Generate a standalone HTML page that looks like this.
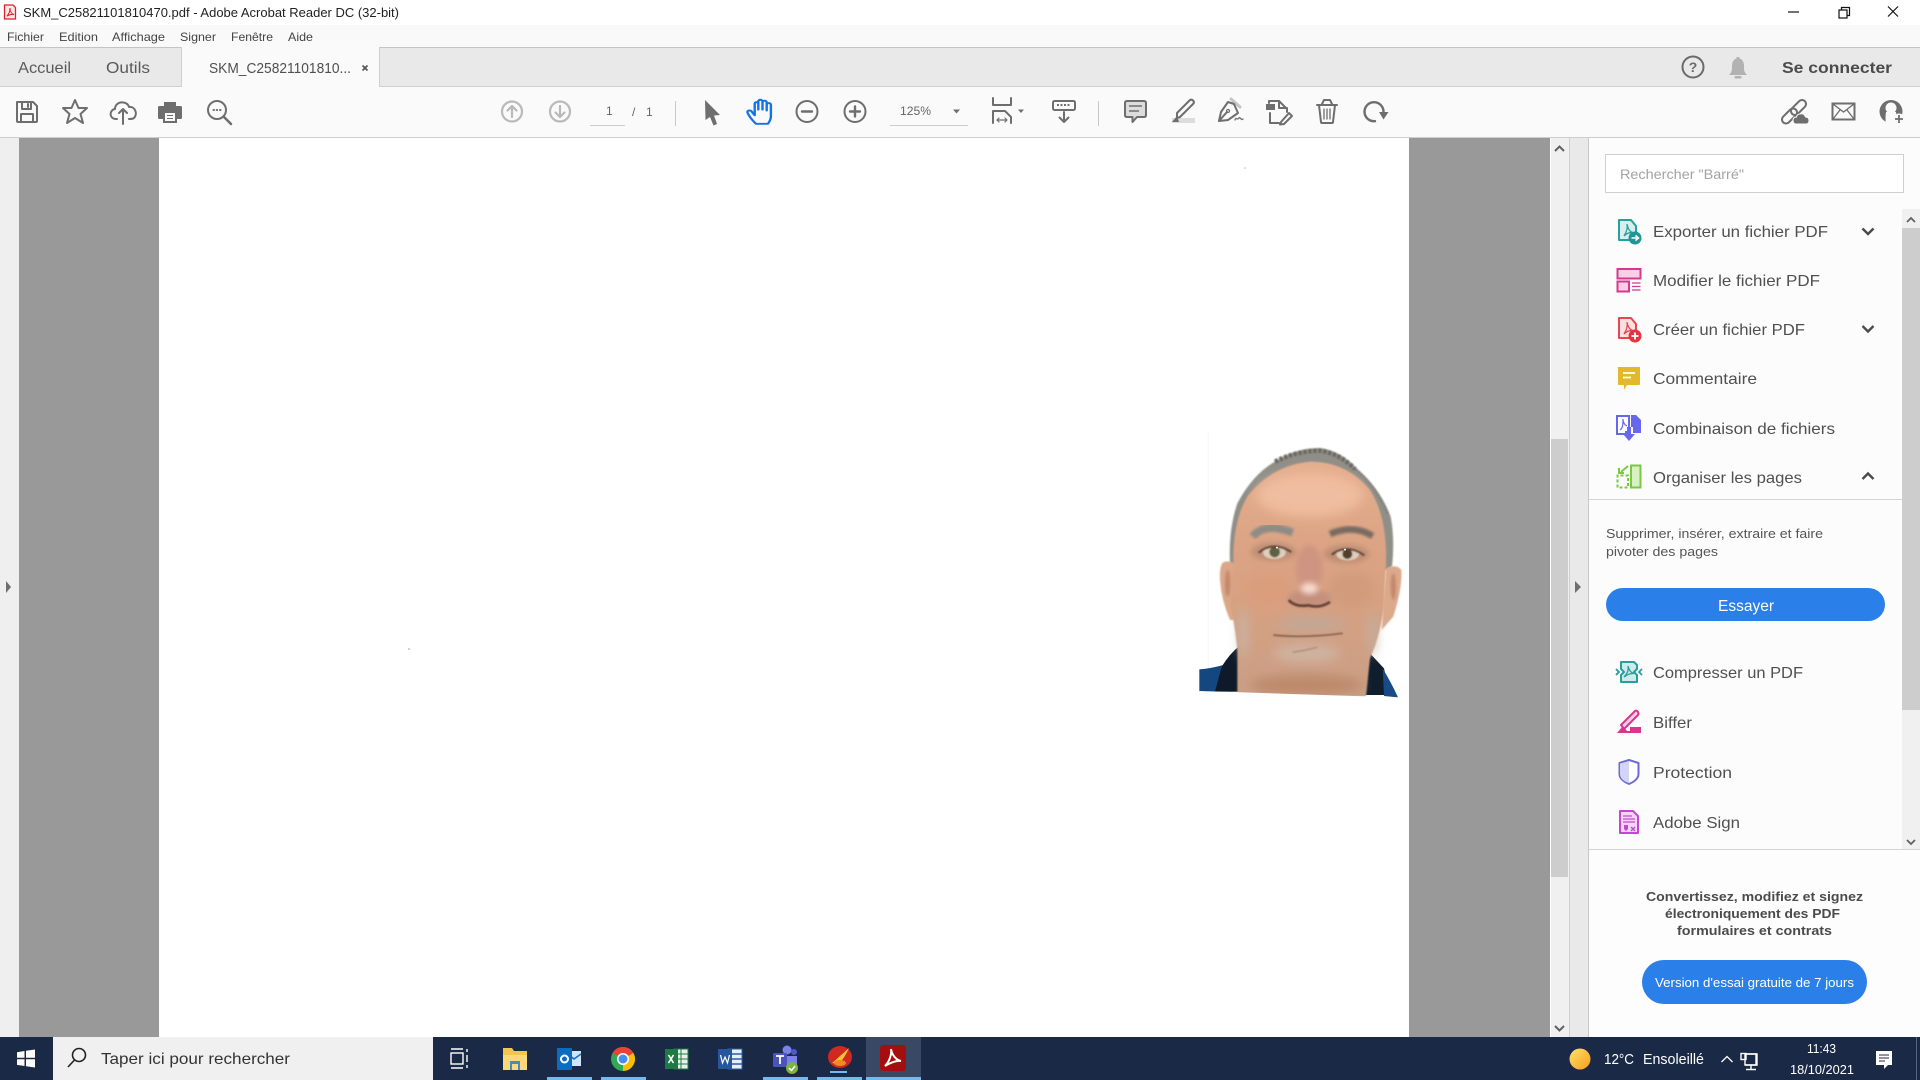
<!DOCTYPE html>
<html lang="fr"><head><meta charset="utf-8"><title>SKM_C25821101810470.pdf - Adobe Acrobat Reader DC (32-bit)</title>
<style>
html,body{margin:0;padding:0;background:#fff;width:1920px;height:1080px;overflow:hidden}
svg{display:block}
text{font-family:"Liberation Sans",sans-serif;fill:#4b4b4b}
.l{font-size:16px;fill:#505050}
.m{font-size:12px;fill:#444}
.k{fill:none;stroke:#6e6e6e;stroke-width:2;stroke-linejoin:round;stroke-linecap:round}
.d{fill:none;stroke:#b9b9b9;stroke-width:2.2;stroke-linecap:round;stroke-linejoin:round}
.w{fill:none;stroke:#fff;stroke-width:1.4}
</style></head><body>
<svg width="1920" height="1080" viewBox="0 0 1920 1080" xmlns="http://www.w3.org/2000/svg">
<defs>
<filter id="b8" x="-30%" y="-30%" width="160%" height="160%"><feGaussianBlur stdDeviation="8"/></filter>
<filter id="b16" x="-40%" y="-40%" width="180%" height="180%"><feGaussianBlur stdDeviation="16"/></filter>
<filter id="b4" x="-30%" y="-30%" width="160%" height="160%"><feGaussianBlur stdDeviation="4"/></filter>
<filter id="b2" x="-30%" y="-30%" width="160%" height="160%"><feGaussianBlur stdDeviation="2"/></filter>
<linearGradient id="skin" x1="0" y1="0" x2="0" y2="1"><stop offset="0" stop-color="#e4ae8f"/><stop offset=".35" stop-color="#dca484"/><stop offset=".65" stop-color="#d5a082"/><stop offset="1" stop-color="#c99f85"/></linearGradient>
<linearGradient id="sun" x1="0" y1="0" x2="1" y2="1"><stop offset="0" stop-color="#ffe26b"/><stop offset="1" stop-color="#f99d1c"/></linearGradient>
<clipPath id="ph"><path d="M0 0H720V832L652 832L58 813V870H0Z"/></clipPath>
</defs>

<!-- title bar -->
<rect width="1920" height="25" fill="#fff"/>
<g transform="translate(10 12)"><path d="M-5.5-7H3L5.500-4.500V7H-5.500Z" fill="#fbe5e5" stroke="#d8232a" stroke-width="1.300"/><path d="M-3 4C-1 2 0-1 0-4C0 0 2 2 4 2.500C1 2 -1 3 -3 4Z" fill="none" stroke="#d8232a" stroke-width="1"/></g>
<text x="23" y="17" font-size="12.500" style="fill:#222" textLength="376" lengthAdjust="spacingAndGlyphs">SKM_C25821101810470.pdf - Adobe Acrobat Reader DC (32-bit)</text>
<path d="M1788 12H1799" stroke="#111" stroke-width="1.200"/>
<g fill="none" stroke="#111" stroke-width="1.200"><rect x="1839" y="10" width="8" height="8"/><path d="M1841.500 10V7.500H1849.500V15.500H1847"/></g>
<path d="M1888 6.500L1898 16.500M1898 6.500L1888 16.500" stroke="#111" stroke-width="1.200"/>

<!-- menu -->
<rect y="25" width="1920" height="22" fill="#f9f9f9"/>
<text class="m" x="7" y="41" textLength="37" lengthAdjust="spacingAndGlyphs">Fichier</text>
<text class="m" x="59" y="41" textLength="39" lengthAdjust="spacingAndGlyphs">Edition</text>
<text class="m" x="112" y="41" textLength="53" lengthAdjust="spacingAndGlyphs">Affichage</text>
<text class="m" x="180" y="41" textLength="36" lengthAdjust="spacingAndGlyphs">Signer</text>
<text class="m" x="231" y="41" textLength="42" lengthAdjust="spacingAndGlyphs">Fenêtre</text>
<text class="m" x="288" y="41" textLength="25" lengthAdjust="spacingAndGlyphs">Aide</text>

<!-- tabs -->
<rect y="47" width="1920" height="40" fill="#e9e9e9"/>
<rect y="47" width="1920" height="1" fill="#c4c4c4"/>
<rect y="86" width="1920" height="1" fill="#cfcfcf"/>
<rect x="182" y="47" width="197" height="40" fill="#fafafa"/>
<path d="M181.500 47V87M379.500 47V87" stroke="#cfcfcf"/>
<text x="18" y="73" font-size="16" style="fill:#5a5a5a" textLength="53" lengthAdjust="spacingAndGlyphs">Accueil</text>
<text x="106" y="73" font-size="16" style="fill:#5a5a5a" textLength="44" lengthAdjust="spacingAndGlyphs">Outils</text>
<text x="209" y="73" font-size="15" style="fill:#505050" textLength="142" lengthAdjust="spacingAndGlyphs">SKM_C25821101810...</text>
<path d="M362.500 65.500L367.500 70.500M367.500 65.500L362.500 70.500" stroke="#555" stroke-width="1.700"/>
<circle cx="1693" cy="67" r="10.500" fill="none" stroke="#6a6a6a" stroke-width="2"/>
<text x="1693" y="72" text-anchor="middle" font-size="14" font-weight="bold" style="fill:#6a6a6a">?</text>
<path d="M1729 75C1732 72 1732 70 1732 66C1732 61 1734.500 59 1736.500 58.500V57H1739.500V58.500C1741.500 59 1744 61 1744 66C1744 70 1744 72 1747 75Z" fill="#b2b2b2"/><rect x="1734.500" y="76" width="7" height="2.500" rx="1" fill="#b2b2b2"/>
<text x="1782" y="73" font-size="16" font-weight="bold" style="fill:#4b4b4b" textLength="110" lengthAdjust="spacingAndGlyphs">Se connecter</text>

<!-- toolbar -->
<rect y="87" width="1920" height="50" fill="#fafafa"/>
<rect y="137" width="1920" height="1" fill="#cdcdcd"/>
<g transform="translate(27 112)" class="k"><path d="M-10-10H6L10-6V9Q10 10 9 10H-9Q-10 10-10 9Z"/><path d="M-5-10V-3H4V-10M1-8V-5"/><path d="M-6 10V2H6V10"/></g>
<path transform="translate(75 112)" class="k" d="M0-12L3.500-4H12L5.500 2L8 11L0 6L-8 11L-5.500 2L-12-4H-3.500Z"/>
<g transform="translate(123 112)" class="k"><path d="M-6 7H-7C-14 7-14-2-8-3C-8-11 4-12 6-5C12-6 15 2 11 6Q10 7 6 7"/><path d="M0 12V-3M-4 1L0-3L4 1"/></g>
<g transform="translate(170 112)"><path d="M-6-10H6V-4H-6Z" fill="#6e6e6e"/><path d="M-12-5Q-12-6-10-6H10Q12-6 12-5V6Q12 7 10 7H7V11H-7V7H-10Q-12 7-12 6Z" fill="#6e6e6e"/><rect x="-5" y="1" width="10" height="8" fill="#fafafa"/><path d="M-3 3.500H3M-3 6.500H3" stroke="#6e6e6e"/></g>
<g transform="translate(219 112)" class="k"><circle cx="-2" cy="-2" r="9"/><path d="M5 5L12 12" stroke-width="2.500"/><path d="M-5.500-2H-5M-2.300-2H-1.800M1-2H1.500"/></g>

<g class="d"><circle cx="512" cy="111.500" r="10"/><path d="M512 117V106M507.500 110.500L512 106L516.500 110.500"/>
<circle cx="560" cy="111.500" r="10"/><path d="M560 106V117M555.500 112.500L560 117L564.500 112.500"/></g>
<text x="606" y="115" font-size="12" style="fill:#666">1</text><rect x="590" y="125" width="35" height="1" fill="#ccc"/>
<text x="632" y="116" font-size="12" style="fill:#666">/</text><text x="646" y="116" font-size="12" style="fill:#666">1</text>
<rect x="675" y="101" width="1" height="25" fill="#c8c8c8"/>
<path d="M705 100L720 115L714 115.500L717 124L713.500 125.500L710 117L705.500 120Z" fill="#6e6e6e"/>
<path transform="translate(759.500 111.500) scale(1.2 .95) translate(-758 -111)" d="M755 124C752 120 749 116 748 112C747.500 109.500 751 109 752 112L754 115V103C754 100.500 757 100.500 757 103V109V100.500C757 98 760.500 98 760.500 100.500V109V101.500C760.500 99 764 99 764 101.500V110V104C764 101.500 767.500 101.500 767.500 104V116C767.500 120 766 122 765 124Z" fill="none" stroke="#1473e6" stroke-width="2" stroke-linejoin="round"/>
<g class="k"><circle cx="807" cy="111.500" r="10.500"/><path d="M802 111.500H812" stroke-width="2.400"/><circle cx="855" cy="111.500" r="10.500"/><path d="M850 111.500H860M855 106.500V116.500" stroke-width="2.400"/></g>
<text x="900" y="115" font-size="12" style="fill:#666" textLength="31" lengthAdjust="spacingAndGlyphs">125%</text>
<path d="M953 109.500H960L956.500 113.500Z" fill="#6e6e6e"/><rect x="890" y="125" width="78" height="1" fill="#ccc"/>
<g class="k"><path d="M993 98V105H1011V98"/><path d="M993 123V111H1005L1011 117V123"/><path d="M997 120H1007M997 120L999 118M997 120L999 122M1007 120L1005 118M1007 120L1005 122" stroke-width="1.200"/></g>
<path d="M1018 109.500H1024L1021 113Z" fill="#6e6e6e"/>
<rect x="1053" y="101" width="22" height="9" rx="1.500" fill="#fafafa" stroke="#6e6e6e" stroke-width="2"/><path d="M1057 105H1071" stroke="#6e6e6e" stroke-width="2" stroke-dasharray="2 1.500"/><path class="k" d="M1064 112V122M1059.500 117.500L1064 122L1068.500 117.500"/>
<rect x="1098" y="101" width="1" height="25" fill="#c8c8c8"/>
<g><path d="M1125 103Q1125 101 1127 101H1144Q1146 101 1146 103V115Q1146 117 1144 117H1137L1132.500 122V117H1127Q1125 117 1125 115Z" fill="#dcdcdc" stroke="#6e6e6e" stroke-width="2" stroke-linejoin="round"/><path d="M1129 106H1142M1129 111H1139" stroke="#6e6e6e" stroke-width="1.500"/></g>
<g><rect x="1172" y="118" width="23" height="5" fill="#dcdcdc"/><path d="M1177 113L1190 100Q1192 99 1193.500 101Q1194.500 103 1193 104L1180 117L1177 118Z" fill="#fafafa" stroke="#6e6e6e" stroke-width="2" stroke-linejoin="round"/><path d="M1177 116L1172 122H1179Z" fill="#6e6e6e"/></g>
<g class="k"><path d="M1231 99L1240 107" stroke-width="3" stroke="#c4c4c4"/><path d="M1228 102L1221 112L1219 121L1228 120L1238 113L1234 104Z" fill="#fafafa"/><path d="M1219 121L1227 112"/><circle cx="1228" cy="111" r="1.500" stroke-width="1.200"/><path d="M1235 120C1236 116 1237 121 1239 118C1240 116 1241 121 1243 119" stroke-width="1.300"/></g>
<g class="k"><path d="M1269 103V101H1279L1287 109V112M1270 113V123H1279"/><path d="M1279 101V108H1287"/><rect x="1266" y="104" width="9" height="6" fill="#6e6e6e" stroke="none"/><path d="M1281 122L1289 113L1292 116L1284 124L1280 124.500Z" fill="#fafafa"/></g>
<g class="k"><path d="M1317 105H1337M1322 104L1324 100H1330L1332 104" /><path d="M1319 105L1321 122Q1321 123 1322 123H1332Q1333 123 1333 122L1335 105" /><path d="M1324 109V119M1327 109V119M1330 109V119" stroke-width="1.300"/></g>
<path d="M1376 121A9.500 9.500 0 1 1 1383.500 112" fill="none" stroke="#6e6e6e" stroke-width="2.400"/><path d="M1379 112H1388.500L1383.500 119.500Z" fill="#6e6e6e"/>

<g fill="none" stroke="#6e6e6e" stroke-width="2"><rect x="-9" y="-4" width="18" height="8" rx="4" transform="translate(1789.500 116) rotate(-45)"/><rect x="-9" y="-4" width="18" height="8" rx="4" transform="translate(1798.500 107.500) rotate(-45)"/></g><path d="M1795 124H1806Q1809 124 1809 120.500Q1809 117 1805.500 117Q1804 113 1800 114Q1797 114 1796.500 117Q1793 117 1793 120.500Q1793 123 1795 124Z" fill="#6e6e6e" stroke="#fafafa" stroke-width="1"/>
<g><rect x="1832.500" y="103.500" width="22" height="16" fill="none" stroke="#6e6e6e" stroke-width="2"/><path d="M1833 104L1843.500 112L1854 104M1833 119L1840 110M1854 119L1847 110" fill="none" stroke="#6e6e6e" stroke-width="1.300"/></g>
<g><circle cx="1891" cy="111.500" r="11.500" fill="#6e6e6e"/><circle cx="1891" cy="108" r="5.500" fill="#fafafa"/><path d="M1886 112Q1885 118 1886 124L1896 124Q1897 118 1896 112Z" fill="#fafafa"/><circle cx="1899" cy="119" r="5.500" fill="#fafafa"/><path d="M1899 115V123M1895 119H1903" stroke="#6e6e6e" stroke-width="1.800"/></g>

<!-- viewer -->
<rect y="138" width="19" height="899" fill="#efefef"/>
<rect x="19" y="138" width="1531" height="899" fill="#999"/>
<rect x="159" y="138" width="1250" height="899" fill="#fff"/>
<rect x="1550" y="138" width="1" height="899" fill="#fff"/>
<path d="M6 581L11 587L6 593Z" fill="#6e6e6e"/>
<circle cx="1245" cy="168" r=".8" fill="#bbb"/><circle cx="409" cy="649" r=".8" fill="#999"/>

<!-- photo -->
<g transform="translate(1180 420) scale(.33333)" clip-path="url(#ph)">
<path d="M85 40V780" stroke="#f8f8f8" stroke-width="4"/>
<path fill="#14477f" d="M58 748Q95 745 130 735L180 810V815H58Z"/>
<path fill="#0e1a2a" d="M125 740Q150 700 178 678L195 815H105Z"/>
<path fill="#0f1d2c" d="M570 700L612 745L630 825L545 825Z"/>
<path fill="#174b84" d="M608 745Q635 790 654 832L612 828Z"/>
<g filter="url(#b2)"><path fill="#8f8f88" d="M150 430Q145 330 172 250Q220 160 290 122Q350 84 420 84Q480 92 530 145Q600 205 632 290Q645 360 636 440L600 460H180Z"/>
<path fill="none" stroke="#6b685f" stroke-width="14" stroke-dasharray="10 5" d="M285 125Q350 92 420 92Q480 100 525 148"/>
<path fill="none" stroke="#777" stroke-width="7" stroke-dasharray="5 5" d="M528 148Q595 205 625 285"/></g>
<path fill="#dba788" filter="url(#b2)" d="M132 426Q118 430 120 480Q124 540 150 600L172 600L170 435Q150 420 132 426Z"/>
<path fill="#dca98b" filter="url(#b2)" d="M618 445Q650 430 664 450Q668 500 640 590L605 630Z"/>
<ellipse cx="143" cy="490" rx="8" ry="40" fill="#c4876c" filter="url(#b4)"/>
<ellipse cx="640" cy="500" rx="8" ry="40" fill="#c4876c" filter="url(#b4)"/>
<path fill="url(#skin)" filter="url(#b2)" d="M160 430Q158 300 205 225Q280 135 390 125Q500 125 570 210Q622 290 618 430L612 560Q600 650 570 715L558 830H172L172 690Q165 620 152 560Z"/>
<g filter="url(#b16)"><ellipse cx="390" cy="225" rx="160" ry="65" fill="#efbd9f"/><ellipse cx="265" cy="510" rx="75" ry="55" fill="#db9e7d"/><ellipse cx="515" cy="510" rx="70" ry="55" fill="#d29b7b"/><ellipse cx="395" cy="612" rx="100" ry="22" fill="#c2a896"/><ellipse cx="380" cy="795" rx="170" ry="30" fill="#bd896b"/><ellipse cx="190" cy="640" rx="10" ry="75" fill="#c5bcb0"/><ellipse cx="578" cy="640" rx="10" ry="70" fill="#beb4a8"/><ellipse cx="380" cy="700" rx="100" ry="28" fill="#cfb3a1"/></g>
<g filter="url(#b8)"><ellipse cx="280" cy="395" rx="68" ry="28" fill="#c08f76"/><ellipse cx="500" cy="402" rx="68" ry="28" fill="#bf8e75"/><ellipse cx="388" cy="445" rx="40" ry="70" fill="#cf9482"/><ellipse cx="388" cy="535" rx="66" ry="26" fill="#c4907d"/></g>
<ellipse cx="388" cy="505" rx="26" ry="17" fill="#f5d9cc" filter="url(#b8)"/>
<g filter="url(#b4)"><path d="M218 350Q255 305 338 338" stroke="#8e8c84" stroke-width="24" fill="none"/><path d="M450 342Q520 312 578 348" stroke="#786b60" stroke-width="20" fill="none"/></g>
<g filter="url(#b2)">
<ellipse cx="283" cy="398" rx="34" ry="19" fill="#dfcfbe"/><ellipse cx="503" cy="403" rx="34" ry="18" fill="#dfcebe"/>
<circle cx="284" cy="396" r="16" fill="#5f5e42"/><circle cx="502" cy="402" r="15" fill="#4f3f2c"/>
<path d="M236 398Q280 362 334 396" stroke="#5e4334" stroke-width="6" fill="none"/><path d="M455 404Q500 370 553 406" stroke="#5e4334" stroke-width="6" fill="none"/>
<path d="M326 540Q345 562 385 556Q420 566 450 546" stroke="#654334" stroke-width="8" fill="none"/>
<path d="M280 645Q370 655 488 640" stroke="#84604f" stroke-width="5" fill="none"/>
<path d="M338 697Q372 692 412 682" stroke="#b08a77" stroke-width="4" fill="none"/></g>
<circle cx="291" cy="383" r="3" fill="#fff"/><circle cx="495" cy="389" r="3" fill="#fff"/>
</g>

<!-- main scrollbar -->
<rect x="1551" y="138" width="18" height="899" fill="#f0f0f0"/>
<rect x="1551" y="439" width="17" height="438" fill="#cdcdcd"/>
<path d="M1555 151L1559.500 146.500L1564 151" fill="none" stroke="#606060" stroke-width="2"/>
<path d="M1555 1026L1559.500 1030.500L1564 1026" fill="none" stroke="#606060" stroke-width="2"/>
<rect x="1569" y="138" width="1" height="899" fill="#cfcfcf"/>
<rect x="1570" y="138" width="18" height="899" fill="#e9e9e9"/>
<rect x="1588" y="138" width="1" height="899" fill="#c8c8c8"/>
<path d="M1575 581L1581 587L1575 593Z" fill="#6e6e6e"/>

<!-- right panel -->
<rect x="1589" y="138" width="331" height="899" fill="#fcfcfc"/>
<rect x="1605.500" y="154.500" width="298" height="38" fill="#fff" stroke="#cfcfcf"/>
<text x="1620" y="179" font-size="14" style="fill:#a3a3a3" textLength="124" lengthAdjust="spacingAndGlyphs">Rechercher "Barré"</text>

<rect x="1902" y="209" width="18" height="640" fill="#f0f0f0"/>
<rect x="1902" y="228" width="18" height="482" fill="#cdcdcd"/>
<path d="M1907 222L1911 218L1915 222" fill="none" stroke="#606060" stroke-width="1.800"/>
<path d="M1907 840L1911 844L1915 840" fill="none" stroke="#606060" stroke-width="1.800"/>

<text class="l" x="1653" y="237" textLength="175" lengthAdjust="spacingAndGlyphs">Exporter un fichier PDF</text>
<text class="l" x="1653" y="286" textLength="167" lengthAdjust="spacingAndGlyphs">Modifier le fichier PDF</text>
<text class="l" x="1653" y="335" textLength="152" lengthAdjust="spacingAndGlyphs">Créer un fichier PDF</text>
<text class="l" x="1653" y="384" textLength="104" lengthAdjust="spacingAndGlyphs">Commentaire</text>
<text class="l" x="1653" y="434" textLength="182" lengthAdjust="spacingAndGlyphs">Combinaison de fichiers</text>
<text class="l" x="1653" y="483" textLength="149" lengthAdjust="spacingAndGlyphs">Organiser les pages</text>
<g fill="none" stroke="#4b4b4b" stroke-width="2.400"><path d="M1862.500 228.500L1868 234L1873.500 228.500"/><path d="M1862.500 326L1868 331.500L1873.500 326"/><path d="M1862.500 479L1868 473.500L1873.500 479"/></g>

<!-- export -->
<g transform="translate(1629 231)"><path d="M-10-11H2L7-5V9H-10Z" fill="#d6eeed" stroke="#2a9d9d" stroke-width="2" stroke-linejoin="round"/><path d="M-5 5C-3 2-1-2-2-7C-1-2 1 1 4 1.500C0 1-3 3-5 5Z" fill="none" stroke="#2a9d9d" stroke-width="1.300"/><circle cx="6" cy="7" r="6.500" fill="#1f9694"/><path d="M2.500 7H9M6.500 4.500L9.500 7L6.500 9.500" fill="none" stroke="#fff" stroke-width="1.600"/></g>
<!-- modify -->
<g transform="translate(1629 280)" stroke="#d83790"><rect x="-11.500" y="-11" width="23" height="9.500" fill="#f8cfe6" stroke-width="2"/><rect x="-11.500" y="1.500" width="11.500" height="10" fill="#f8cfe6" stroke-width="2"/><path d="M3 3H11.500M3 6.500H11.500M3 10H11.500" stroke-width="1.300"/></g>
<!-- create -->
<g transform="translate(1629 329)"><path d="M-10-11H2L7-5V9H-10Z" fill="#fbe0e1" stroke="#e34850" stroke-width="2" stroke-linejoin="round"/><path d="M-5 5C-3 2-1-2-2-7C-1-2 1 1 4 1.500C0 1-3 3-5 5Z" fill="none" stroke="#e34850" stroke-width="1.300"/><circle cx="6" cy="7" r="6.500" fill="#e3343f"/><path d="M2.500 7H9.500M6 3.500V10.500" stroke="#fff" stroke-width="1.800"/></g>
<!-- comment -->
<g transform="translate(1629 378)"><path d="M-11-11H11V6Q11 7 10 7H-2L-5 12V7H-10Q-11 7-11 6Z" fill="#e1b92a"/><path d="M-6-5H6M-6-0.500H2" stroke="#fff" stroke-width="1.800"/></g>
<!-- combine -->
<g transform="translate(1629 428)"><path d="M-12-12H0V4H-3V6H-12Z" fill="#fff" stroke="#6767ec" stroke-width="2"/><path d="M2-13H7L12-8V5H4V-1H2Z" fill="#6767ec"/><path d="M-9 2C-6 0-6-4-6-9C-6-5-4-3-2-2" fill="none" stroke="#6767ec" stroke-width="1.200"/><path d="M-2-1H2V6H6L0 13L-6 6H-2Z" fill="#6767ec"/></g>
<!-- organise -->
<g transform="translate(1629 476)"><rect x="2" y="-10.500" width="9.500" height="22" fill="#d7f0c4" stroke="#7ac943" stroke-width="2"/><path d="M-11.500 11.500V-0.500H-1V11.500Z" fill="none" stroke="#7ac943" stroke-width="2" stroke-dasharray="3 2"/><path d="M-1-10L-8-4M-10-8V-3H-5" fill="none" stroke="#7ac943" stroke-width="2"/></g>

<rect x="1589" y="499" width="313" height="1" fill="#d4d4d4"/>
<text x="1606" y="538" font-size="13" style="fill:#555" textLength="217" lengthAdjust="spacingAndGlyphs">Supprimer, insérer, extraire et faire</text>
<text x="1606" y="556" font-size="13" style="fill:#555" textLength="112" lengthAdjust="spacingAndGlyphs">pivoter des pages</text>
<rect x="1606" y="588" width="279" height="33" rx="16.500" fill="#2a7fe8"/>
<text x="1718" y="611" font-size="16" style="fill:#fff" textLength="56" lengthAdjust="spacingAndGlyphs">Essayer</text>

<text class="l" x="1653" y="678" textLength="150" lengthAdjust="spacingAndGlyphs">Compresser un PDF</text>
<text class="l" x="1653" y="728" textLength="39" lengthAdjust="spacingAndGlyphs">Biffer</text>
<text class="l" x="1653" y="778" textLength="79" lengthAdjust="spacingAndGlyphs">Protection</text>
<text class="l" x="1653" y="828" textLength="87" lengthAdjust="spacingAndGlyphs">Adobe Sign</text>
<!-- compress -->
<g transform="translate(1629 672)"><path d="M-8-10H5L8-7V-3L5 0L8 3V10H-8V3L-5 0L-8-3Z" fill="#cdebe9" stroke="#2a9d9d" stroke-width="2" stroke-linejoin="round"/><path d="M-13-3L-10 0L-13 3M13-3L10 0L13 3" fill="none" stroke="#2a9d9d" stroke-width="1.800"/><path d="M-5 5C-2 2 0-2-1-6C0-2 2 1 5 1.500C1 1-2 3-5 5Z" fill="none" stroke="#2a9d9d" stroke-width="1.300"/></g>
<!-- strike -->
<g transform="translate(1629 722)"><path d="M-8 3L6-11Q8-12 9-10Q10-8 9-7L-5 7Z" fill="#f8cfe6" stroke="#d83790" stroke-width="2" stroke-linejoin="round"/><path d="M-12 11L-6 4L-2 9H12V11Z" fill="#d83790"/><rect x="1" y="5" width="11" height="6" fill="#d83790"/></g>
<!-- shield -->
<g transform="translate(1629 772)"><path d="M0-12L9.500-9V2C9.500 7 4 10.500 0 12C-4 10.500-9.500 7-9.500 2V-9Z" fill="#fff" stroke="#6a6ad8" stroke-width="2" stroke-linejoin="round"/><path d="M0-11L9-8.500V2C9 7 4 10 0 11Z" fill="#d4d4f7" transform="scale(-1 1)"/></g>
<!-- sign -->
<g transform="translate(1629 822)"><path d="M-9-11H4L9-6V11H-9Z" fill="#f3d7f5" stroke="#c448cf" stroke-width="2" stroke-linejoin="round"/><path d="M-6-6H3M-6-3H6M-6 0H6" stroke="#c448cf" stroke-width="1.200"/><path d="M-5 3H-1V7L-3 9L-5 7Z" fill="#c448cf"/><path d="M2 5L6 9M6 5L2 9" stroke="#c448cf" stroke-width="1.400"/></g>

<rect x="1589" y="849" width="331" height="1" fill="#d4d4d4"/>
<rect x="1589" y="850" width="331" height="187" fill="#fdfdfd"/>
<g font-size="13" font-weight="bold"><text x="1646" y="901" style="fill:#4b4b4b" textLength="217" lengthAdjust="spacingAndGlyphs">Convertissez, modifiez et signez</text>
<text x="1665" y="918" style="fill:#4b4b4b" textLength="175" lengthAdjust="spacingAndGlyphs">électroniquement des PDF</text>
<text x="1677" y="935" style="fill:#4b4b4b" textLength="155" lengthAdjust="spacingAndGlyphs">formulaires et contrats</text></g>
<rect x="1642" y="960" width="225" height="44" rx="22" fill="#2a7fe8"/>
<text x="1655" y="987" font-size="13" style="fill:#fff" textLength="199" lengthAdjust="spacingAndGlyphs">Version d'essai gratuite de 7 jours</text>

<!-- taskbar -->
<rect y="1037" width="1920" height="43" fill="#1a2945"/>
<g fill="#fff"><path d="M17 1052.200L24.500 1051V1057.700H17Z"/><path d="M26 1050.800L35 1049.500V1057.700H26Z"/><path d="M17 1059.300H24.500V1066L17 1064.900Z"/><path d="M26 1059.300H35V1067.500L26 1066.200Z"/></g>
<rect x="53" y="1037" width="380" height="43" fill="#f0f0f0"/>
<g fill="none" stroke="#222" stroke-width="1.600"><circle cx="79" cy="1055" r="6.500"/><path d="M74.500 1060L68 1067"/></g>
<text x="101" y="1064" font-size="16" style="fill:#333" textLength="189" lengthAdjust="spacingAndGlyphs">Taper ici pour rechercher</text>
<g class="w"><path d="M451 1049H463M451 1068H463"/><rect x="451" y="1053" width="12" height="11"/><path d="M467 1049V1052M467 1055V1062M467 1065V1068"/></g>
<g transform="translate(515 1059)"><path d="M-12-11H-3L-1-8H12V10H-12Z" fill="#f5c64f"/><rect x="-12" y="-4" width="24" height="15" fill="#fbd978"/><rect x="-5" y="2" width="10" height="9" fill="#3a8fd0"/><rect x="-3" y="5" width="6" height="6" fill="#fbd978"/></g>
<g transform="translate(569 1059)"><rect x="-2" y="-8" width="14" height="15" fill="#cfe6fa"/><path d="M-1-5L5 0L12-5" fill="none" stroke="#1170c4" stroke-width="1.500"/><rect x="-12" y="-11" width="15" height="22" rx="1" fill="#0b6cc0"/><circle cx="-4.500" cy="0" r="3.500" fill="none" stroke="#fff" stroke-width="2"/></g>
<g transform="translate(623 1059)"><circle r="12" fill="#34a853"/><path d="M0 0L-10.400-6A12 12 0 0 1 10.400-6Z" fill="#ea4335"/><path d="M0 0L10.400-6A12 12 0 0 1 0 12Z" fill="#fbbc05"/><circle r="6" fill="#fff"/><circle r="4.500" fill="#4a8df0"/></g>
<g transform="translate(676 1059)"><rect x="-2" y="-10" width="14" height="20" fill="#e6f2ea" stroke="#1e7d45"/><path d="M-2-5H12M-2 0H12M-2 5H12M5-10V10" stroke="#1e7d45"/><rect x="-11" y="-10" width="13" height="20" fill="#1d7a43"/><path d="M-7.500-4L-2.500 4M-2.500-4L-7.500 4" stroke="#fff" stroke-width="1.600"/></g>
<g transform="translate(730 1059)"><rect x="-2" y="-10" width="14" height="20" fill="#e8eff9" stroke="#2b5ea8"/><path d="M1-5H12M1 0H12M1 5H12" stroke="#2b5ea8" stroke-width="1.500"/><rect x="-12" y="-10" width="14" height="20" fill="#25569e"/><path d="M-9.500-4L-7.500 4L-5 -2L-2.500 4L-0.500-4" fill="none" stroke="#fff" stroke-width="1.200"/></g>
<g transform="translate(785 1059)"><circle cx="2" cy="-9" r="4.500" fill="#7b83eb"/><circle cx="9" cy="-7" r="3" fill="#5059c9"/><path d="M0-3H12V6H0Z" fill="#7b83eb"/><rect x="-12" y="-6" width="14" height="14" rx="1" fill="#4b53bc"/><path d="M-9-3H-1M-5-3V5" stroke="#fff" stroke-width="1.800"/><circle cx="7" cy="9" r="6" fill="#7cb342"/><path d="M4 9L6.500 11.500L10 7" fill="none" stroke="#fff" stroke-width="1.500"/></g>
<g transform="translate(840 1057)"><ellipse rx="12" ry="11" fill="#d1281f"/><path d="M-8 6C-3 2 2-3 9-9C6-2 2 4-2 7Z" fill="#f5c33b"/><ellipse cx="0" cy="6" rx="6" ry="3" fill="#f08a24"/></g><rect x="830" y="1071" width="17" height="2" fill="#76b9ed"/>
<rect x="866" y="1037" width="55" height="43" fill="#3a4963"/>
<g transform="translate(893 1058)"><rect x="-13" y="-13" width="26" height="26" rx="3" fill="#a50e0e"/><path d="M-8 8C-4 4-1-3-2-9C-1-3 3 2 8 3C3 2-3 5-8 8Z" fill="none" stroke="#fff" stroke-width="2"/></g>
<g fill="#76b9ed"><rect x="547" y="1077" width="45" height="3"/><rect x="601" y="1077" width="45" height="3"/><rect x="763" y="1077" width="45" height="3"/><rect x="817" y="1077" width="45" height="3"/><rect x="866" y="1077" width="55" height="3"/></g>

<circle cx="1580" cy="1059" r="10.500" fill="url(#sun)"/>
<text x="1604" y="1064" font-size="15" style="fill:#fff" textLength="30" lengthAdjust="spacingAndGlyphs">12°C</text>
<text x="1643" y="1064" font-size="15" style="fill:#fff" textLength="61" lengthAdjust="spacingAndGlyphs">Ensoleillé</text>
<path d="M1721.500 1062L1727 1056.500L1732.500 1062" fill="none" stroke="#fff" stroke-width="1.300"/>
<g class="w" stroke-width="1.200"><rect x="1745" y="1054" width="11" height="11"/><rect x="1741" y="1053.500" width="5" height="6"/><path d="M1746 1054H1757V1065H1745M1751 1065V1069M1746 1069.500H1756"/></g>
<text x="1807" y="1053" font-size="13" style="fill:#fff" textLength="29" lengthAdjust="spacingAndGlyphs">11:43</text>
<text x="1790" y="1074" font-size="13" style="fill:#fff" textLength="64" lengthAdjust="spacingAndGlyphs">18/10/2021</text>
<path d="M1876 1051H1892V1065H1888L1884 1069V1065H1876Z" fill="#fff"/><path d="M1879 1055H1889M1879 1058H1889M1879 1061H1885" stroke="#1a2945"/>
<rect x="1916" y="1037" width="1" height="43" fill="#56647d"/>
</svg>
</body></html>
